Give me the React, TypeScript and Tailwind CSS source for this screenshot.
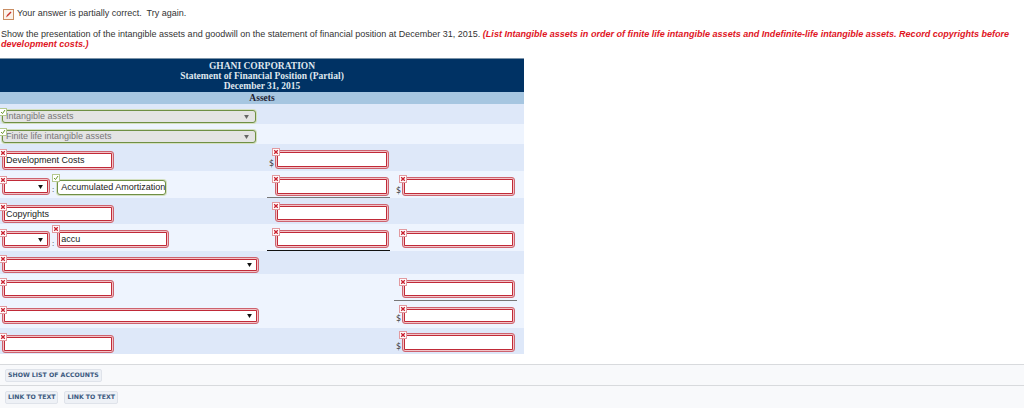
import type { ReactNode } from "react";

type Tone = "red" | "green";

function Badge({ tone, className }: { tone: Tone; className: string }) {
  return (
    <span
      className={`absolute z-10 flex h-[8px] w-[8px] items-center justify-center border bg-white ${
        tone === "red" ? "border-[#e29aa0]" : "border-[#b5c98f]"
      } ${className}`}
    >
      <svg viewBox="0 0 6 6" className="h-[6px] w-[6px]">
        {tone === "red" ? (
          <path d="M1.2 1.2L4.8 4.8M4.8 1.2L1.2 4.8" stroke="#c8202f" strokeWidth="1.3" fill="none" />
        ) : (
          <path d="M1 3L2.5 4.6L5 1" stroke="#6d9a2e" strokeWidth="1" fill="none" />
        )}
      </svg>
    </span>
  );
}

function Arrow({ gray }: { gray?: boolean }) {
  return (
    <svg viewBox="0 0 6 5" className="absolute right-[7px] top-1/2 h-[4px] w-[5px] -translate-y-1/2">
      <path d="M0 0H6L3 5Z" fill={gray ? "#666" : "#111"} />
    </svg>
  );
}

function Field({
  className,
  tone = "red",
  text,
  select,
  disabled,
  dollar,
  badge = "-left-[2px] -top-[2px]",
}: {
  className: string;
  tone?: Tone;
  text?: string;
  select?: boolean;
  disabled?: boolean;
  dollar?: boolean;
  badge?: string;
}) {
  const frame =
    tone === "red"
      ? "border-[#cd626e] shadow-[inset_0_0_0_1px_#f2c4c8,inset_0_0_0_2px_#c02a38]"
      : "border-[#6f8f45] shadow-[0_0_0_1px_#d3dfc0]";
  return (
    <div className={`relative ${className}`}>
      {dollar && (
        <span className="absolute -left-[5px] bottom-[1px] font-['DejaVu_Sans',sans-serif] text-[8px] leading-none text-[#333]">
          $
        </span>
      )}
      <Badge tone={tone} className={badge} />
      <div
        className={`ml-[1px] flex h-full items-center whitespace-nowrap rounded-[3px] border pl-[3px] text-[9px] leading-none ${frame} ${
          disabled ? "bg-[#e4e4e4] text-[#777]" : "bg-white text-[#222]"
        }`}
      >
        {text}
        {select && <Arrow gray={disabled} />}
      </div>
    </div>
  );
}

function Row({ className, children }: { className: string; children: ReactNode }) {
  return <div className={`flex items-start ${className}`}>{children}</div>;
}

function LinkButton({ children }: { children: ReactNode }) {
  return (
    <button className="h-[13px] rounded-[2px] border border-[#dfe3ea] bg-[#eef1f6] px-[2px] font-['DejaVu_Sans',sans-serif] text-[6.2px] font-bold leading-none text-[#3d5a80]">
      {children}
    </button>
  );
}

export default function App() {
  return (
    <div className="h-[408px] w-[1024px] overflow-hidden bg-white font-['Liberation_Sans',sans-serif] text-[#333]">
      <div className="flex h-[26px] items-center gap-[3px] pl-[3px] pt-[2px] text-[9px]">
        <span className="flex h-[11px] w-[11px] items-center justify-center border border-[#c98d62] bg-[#fbf3ea]">
          <svg viewBox="0 0 9 9" className="h-[9px] w-[9px]">
            <path d="M2 7.5L3 5L6.5 1.5L7.5 2.5L4 6Z" fill="#c8302a" />
          </svg>
        </span>
        <span>Your answer is partially correct.&nbsp; Try again.</span>
      </div>
      <div className="h-[32px] pl-[1px] pt-[3px] text-[9px] leading-[10px]">
        <div className="whitespace-nowrap">
          Show the presentation of the intangible assets and goodwill on the statement of financial position at December
          31, 2015.{" "}
          <span className="text-[9.05px] font-bold italic text-[#e0141e]">
            (List Intangible assets in order of finite life intangible assets and Indefinite-life intangible assets.
            Record copyrights before
          </span>
        </div>
        <div className="text-[9.05px] font-bold italic text-[#e0141e]">development costs.)</div>
      </div>

      <div className="w-[524px]">
        <div className="flex h-[34px] flex-col items-center justify-center border-t border-[#7c93a8] bg-[#003264] font-['Liberation_Serif',serif] text-[9.5px] font-bold leading-[10px] text-[#dfe6ee]">
          <div>GHANI CORPORATION</div>
          <div>Statement of Financial Position (Partial)</div>
          <div>December 31, 2015</div>
        </div>
        <div className="flex h-[12px] items-center justify-center bg-[#a6c6e1] font-['Liberation_Serif',serif] text-[9.5px] font-bold text-[#223]">
          Assets
        </div>

        <Row className="h-[20px] bg-[#dee8f9]">
          <Field
            tone="green"
            select
            disabled
            text="Intangible assets"
            className="ml-[1px] mt-[6px] h-[13px] w-[255px]"
          />
        </Row>
        <Row className="h-[20px] bg-[#eef4fe]">
          <Field
            tone="green"
            select
            disabled
            text="Finite life intangible assets"
            className="ml-[1px] mt-[6px] h-[13px] w-[255px]"
          />
        </Row>
        <Row className="h-[27px] bg-[#dee8f9]">
          <div className="w-[267px] pl-[1px] pt-[7px]">
            <Field text="Development Costs" className="h-[19px] w-[113px]" />
          </div>
          <div className="w-[127px] pl-[7px] pt-[6px]">
            <Field dollar className="h-[19px] w-[115px]" />
          </div>
        </Row>
        <Row className="h-[27px] bg-[#eef4fe]">
          <div className="flex w-[267px] items-start pl-[1px] pt-[7px]">
            <Field select className="h-[17px] w-[49px]" />
            <span className="ml-[2px] mt-[8px] text-[8px] leading-none">:</span>
            <Field
              tone="green"
              text="Accumulated Amortization"
              className="ml-[2px] mt-[2px] h-[15px] w-[110px]"
              badge="-left-[4px] -top-[6px]"
            />
          </div>
          <div className="h-[27px] w-[127px] pl-[7px] pt-[6px]">
            <Field className="h-[19px] w-[115px]" />
            <div className="-ml-[7px] mt-[1px] h-px w-[123px] bg-[#777]" />
          </div>
          <div className="pl-[7px] pt-[6px]">
            <Field dollar className="h-[19px] w-[114px]" />
          </div>
        </Row>
        <Row className="h-[26px] bg-[#dee8f9]">
          <div className="w-[267px] pl-[1px] pt-[7px]">
            <Field text="Copyrights" className="h-[18px] w-[113px]" />
          </div>
          <div className="w-[127px] pl-[7px] pt-[6px]">
            <Field className="h-[18px] w-[115px]" />
          </div>
        </Row>
        <Row className="h-[27px] bg-[#eef4fe]">
          <div className="flex w-[267px] items-start pl-[1px] pt-[7px]">
            <Field select className="h-[17px] w-[49px]" />
            <span className="ml-[2px] mt-[9px] text-[8px] leading-none">:</span>
            <Field text="accu" className="ml-[2px] -mt-px h-[18px] w-[113px]" badge="-left-[4px] -top-[5px]" />
          </div>
          <div className="h-[27px] w-[127px] pl-[7px] pt-[6px]">
            <Field className="h-[18px] w-[115px]" />
            <div className="-ml-[7px] mt-[2px] h-px w-[123px] bg-[#111]" />
          </div>
          <div className="pl-[7px] pt-[7px]">
            <Field className="h-[17px] w-[114px]" />
          </div>
        </Row>
        <Row className="h-[23px] bg-[#dee8f9]">
          <Field select className="ml-[1px] mt-[6px] h-[16px] w-[258px]" />
        </Row>
        <Row className="h-[27px] bg-[#eef4fe]">
          <div className="w-[394px] pl-[1px] pt-[6px]">
            <Field className="h-[18px] w-[113px]" />
          </div>
          <div className="h-[27px] pt-[6px]">
            <Field className="ml-[7px] h-[18px] w-[114px]" />
            <div className="mt-[2px] h-px w-[123px] bg-[#777]" />
          </div>
        </Row>
        <Row className="h-[27px] bg-[#eef4fe]">
          <div className="w-[401px] pl-[1px] pt-[7px]">
            <Field select className="h-[16px] w-[258px]" />
          </div>
          <div className="pt-[6px]">
            <Field dollar className="h-[17px] w-[114px]" />
          </div>
        </Row>
        <Row className="h-[26px] bg-[#dee8f9]">
          <div className="w-[401px] pl-[1px] pt-[7px]">
            <Field className="h-[18px] w-[113px]" />
          </div>
          <div className="pt-[5px]">
            <Field dollar className="h-[19px] w-[114px]" />
          </div>
        </Row>
      </div>

      <div className="mt-[10px] border-t border-[#d8dadd] bg-[#f8f9fb]">
        <div className="flex h-[21px] items-center border-b border-[#d8dadd] pl-[5px]">
          <LinkButton>SHOW LIST OF ACCOUNTS</LinkButton>
        </div>
        <div className="flex h-[23px] items-center gap-[6px] pl-[5px]">
          <LinkButton>LINK TO TEXT</LinkButton>
          <LinkButton>LINK TO TEXT</LinkButton>
        </div>
      </div>
    </div>
  );
}
